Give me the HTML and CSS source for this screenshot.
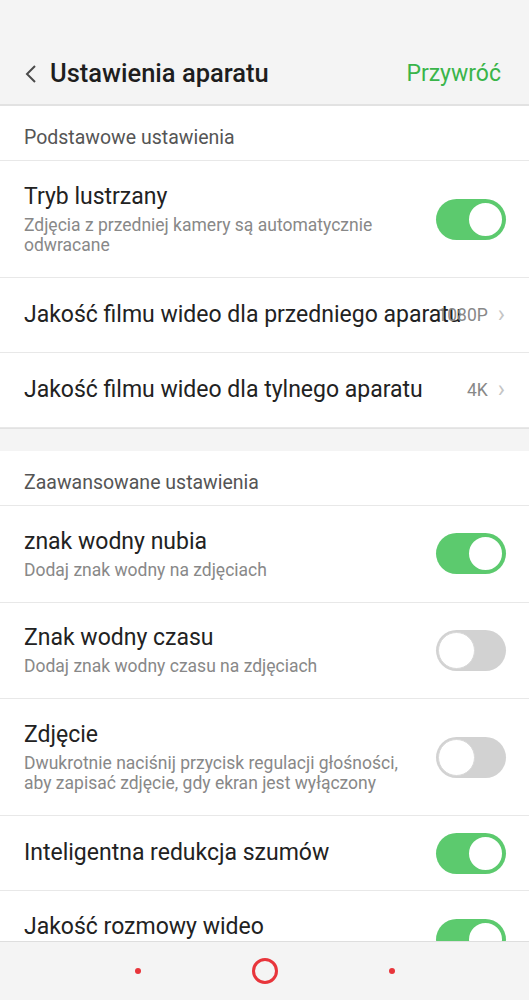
FILE: index.html
```html
<!DOCTYPE html>
<html lang="pl">

<head>
    <meta charset="UTF-8">
    <meta name="viewport" content="width=device-width, initial-scale=1.0">
    <title>Ustawienia aparatu</title>
    <link rel="stylesheet" href="styles.css">
</head>

<body>
    <div class="topbar">
        <div class="title-bar">
            <svg class="back" width="14" height="20" viewBox="0 0 14 20">
                <path d="M11 2 L3 10 L11 18" fill="none" stroke="#4a4a4a" stroke-width="2" />
            </svg>
            <span class="page-title">Ustawienia aparatu</span>
            <span class="reset">Przywróć</span>
        </div>
    </div>

    <div class="group">
        <div class="group-title">Podstawowe ustawienia</div>

        <div class="row">
            <div class="text">
                <div class="name">Tryb lustrzany</div>
                <div class="desc">Zdjęcia z przedniej kamery są automatycznie odwracane</div>
            </div>
            <div class="switch on"><span class="knob"></span></div>
        </div>

        <div class="row single">
            <div class="text">
                <div class="name">Jakość filmu wideo dla przedniego aparatu</div>
            </div>
            <span class="value">1080P</span>
            <span class="chevron">&#8250;</span>
        </div>

        <div class="row single last">
            <div class="text">
                <div class="name">Jakość filmu wideo dla tylnego aparatu</div>
            </div>
            <span class="value">4K</span>
            <span class="chevron">&#8250;</span>
        </div>
    </div>

    <div class="gap"></div>

    <div class="group">
        <div class="group-title">Zaawansowane ustawienia</div>

        <div class="row">
            <div class="text">
                <div class="name">znak wodny nubia</div>
                <div class="desc">Dodaj znak wodny na zdjęciach</div>
            </div>
            <div class="switch on"><span class="knob"></span></div>
        </div>

        <div class="row">
            <div class="text">
                <div class="name">Znak wodny czasu</div>
                <div class="desc">Dodaj znak wodny czasu na zdjęciach</div>
            </div>
            <div class="switch"><span class="knob"></span></div>
        </div>

        <div class="row">
            <div class="text">
                <div class="name">Zdjęcie</div>
                <div class="desc">Dwukrotnie naciśnij przycisk regulacji głośności, aby zapisać zdjęcie, gdy ekran jest wyłączony</div>
            </div>
            <div class="switch"><span class="knob"></span></div>
        </div>

        <div class="row single">
            <div class="text">
                <div class="name">Inteligentna redukcja szumów</div>
            </div>
            <div class="switch on"><span class="knob"></span></div>
        </div>

        <div class="row tall">
            <div class="text">
                <div class="name">Jakość rozmowy wideo</div>
            </div>
            <div class="switch on"><span class="knob"></span></div>
        </div>
    </div>

    <!-- pasek nawigacji -->
    <div class="navbar">
        <span class="dot"></span>
        <span class="home"></span>
        <span class="dot"></span>
    </div>
</body>

</html>
```

FILE: styles.css
```css
* {
    box-sizing: border-box;
}

body {
    margin: 0;
    font-family: Roboto, "Noto Sans", sans-serif;
    background-color: #fff;
    color: #222;
    overflow: hidden;
}

.topbar {
    background-color: #f4f4f4;
    padding-top: 42px;
    border-bottom: 2px solid #e2e2e2;
}

.title-bar {
    height: 62px;
    display: flex;
    align-items: center;
    padding: 0 28px 0 24px;
}

.back {
    margin-right: 12px;
    margin-top: 1px;
}

.page-title {
    font-size: 25.5px;
    font-weight: 500;
    color: #1e1e1e;
    flex: 1;
}

.reset {
    font-size: 23px;
    color: #3ab54a;
}

.group-title {
    font-size: 19.5px;
    line-height: 24px;
    color: #555;
    padding: 20px 24px 10px;
    border-bottom: 1px solid #e8e8e8;
}

.row {
    display: flex;
    align-items: center;
    padding: 21.5px 23px 21.5px 24px;
    border-bottom: 1px solid #e8e8e8;
}

.row.single {
    min-height: 75px;
    padding-top: 0;
    padding-bottom: 0;
}

.row.tall {
    align-items: flex-start;
    padding-bottom: 46px;
    border-bottom: none;
}

.row.tall .switch {
    margin-top: 6px;
}

.text {
    flex: 1;
    min-width: 0;
}

.name {
    font-size: 23px;
    line-height: 28px;
    white-space: nowrap;
}

.desc {
    font-size: 17.5px;
    line-height: 20.5px;
    color: #888;
    margin-top: 4px;
}

.value {
    font-size: 17.5px;
    color: #888;
    margin-left: 12px;
}

.chevron {
    font-size: 24px;
    line-height: 24px;
    color: #c4c4c4;
    margin-left: 10px;
    margin-right: 1px;
    margin-top: -3px;
}

.switch {
    width: 70px;
    height: 41px;
    border-radius: 21px;
    background-color: #d2d2d2;
    padding: 2px;
    display: flex;
    flex-shrink: 0;
    margin-left: 12px;
}

.switch .knob {
    width: 37px;
    height: 37px;
    border-radius: 50%;
    background-color: #fff;
    border: 1.5px solid #d8d8d8;
}

.switch.on {
    background-color: #5cca6e;
    justify-content: flex-end;
}

.switch.on .knob {
    border: 2px solid #5cca6e;
}

.gap {
    height: 23px;
    background-color: #f4f4f4;
    border-top: 1px solid #e2e2e2;
}

.navbar {
    position: fixed;
    left: 0;
    right: 0;
    bottom: 0;
    height: 59px;
    background-color: #f4f4f4;
    border-top: 1px solid #dedede;
    display: flex;
    justify-content: center;
    align-items: center;
    gap: 111px;
}

.dot {
    width: 6px;
    height: 6px;
    border-radius: 50%;
    background-color: #e8353b;
}

.home {
    width: 26px;
    height: 26px;
    border-radius: 50%;
    border: 3px solid #e8353b;
}
```
